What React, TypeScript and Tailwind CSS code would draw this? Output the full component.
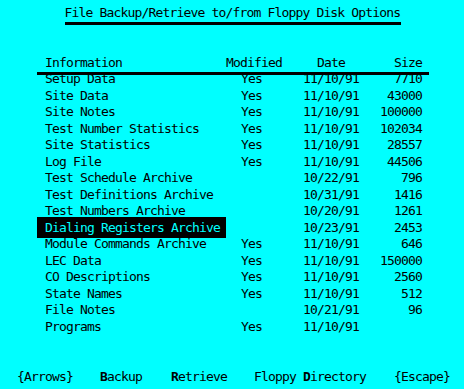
const rows: [string, string, string, string][] = [
  ["Setup Data", "Yes", "11/10/91", "7710"],
  ["Site Data", "Yes", "11/10/91", "43000"],
  ["Site Notes", "Yes", "11/10/91", "100000"],
  ["Test Number Statistics", "Yes", "11/10/91", "102034"],
  ["Site Statistics", "Yes", "11/10/91", "28557"],
  ["Log File", "Yes", "11/10/91", "44506"],
  ["Test Schedule Archive", "", "10/22/91", "796"],
  ["Test Definitions Archive", "", "10/31/91", "1416"],
  ["Test Numbers Archive", "", "10/20/91", "1261"],
  ["Dialing Registers Archive", "", "10/23/91", "2453"],
  ["Module Commands Archive", "Yes", "11/10/91", "646"],
  ["LEC Data", "Yes", "11/10/91", "150000"],
  ["CO Descriptions", "Yes", "11/10/91", "2560"],
  ["State Names", "Yes", "11/10/91", "512"],
  ["File Notes", "", "10/21/91", "96"],
  ["Programs", "Yes", "11/10/91", ""],
];

const SELECTED = 9;

export default function App() {
  return (
    <div className="w-[464px] h-[389px] overflow-hidden bg-[#00ffff] text-black font-['DejaVu_Sans_Mono',monospace] text-[13px] tracking-[-0.83px] leading-none">
      {/* title */}
      <div className="pt-[4.5px] flex justify-center">
        <div className="w-[336px] ml-[1px]">
          <div className="h-[16px] flex items-center whitespace-pre">
            File Backup/Retrieve to/from Floppy Disk Options
          </div>
          <div className="mt-[1.5px] h-[3px] bg-black" />
        </div>
      </div>

      {/* table */}
      <div className="ml-[37px] w-[392px] mt-[29px]">
        <div className="flex h-[16.5px] items-center whitespace-pre">
          <div className="w-[189px] pl-[8px]">Information</div>
          <div className="w-[77px]">Modified</div>
          <div className="w-[56px] pl-[14px]">Date</div>
          <div className="w-[63px] text-right">Size</div>
        </div>
        <div className="relative z-10 mt-[1.75px] mb-[-4.75px] h-[3px] bg-black" />
        {rows.map(([name, mod, date, size], i) => (
          <div key={name} className="flex h-[16.5px] items-center whitespace-pre">
            {i === SELECTED ? (
              <div className="w-[189px] h-[21px] pl-[8px] flex items-center bg-black text-[#00ffff]">
                {name}
              </div>
            ) : (
              <div className="w-[189px] pl-[8px]">{name}</div>
            )}
            <div className="w-[77px] pl-[15px]">{mod}</div>
            <div className="w-[56px]">{date}</div>
            <div className="w-[63px] text-right">{size}</div>
          </div>
        ))}
      </div>

      {/* key bar */}
      <div className="mt-[33.5px] h-[16px] flex items-center whitespace-pre pl-[17px]">
        <span className="w-[83px]">{"{Arrows}"}</span>
        <span className="w-[71px]">
          <b>B</b>ackup
        </span>
        <span className="w-[83px]">
          <b>R</b>etrieve
        </span>
        <span className="w-[140px]">
          Floppy <b>D</b>irectory
        </span>
        <span>{"{Escape}"}</span>
      </div>
    </div>
  );
}
